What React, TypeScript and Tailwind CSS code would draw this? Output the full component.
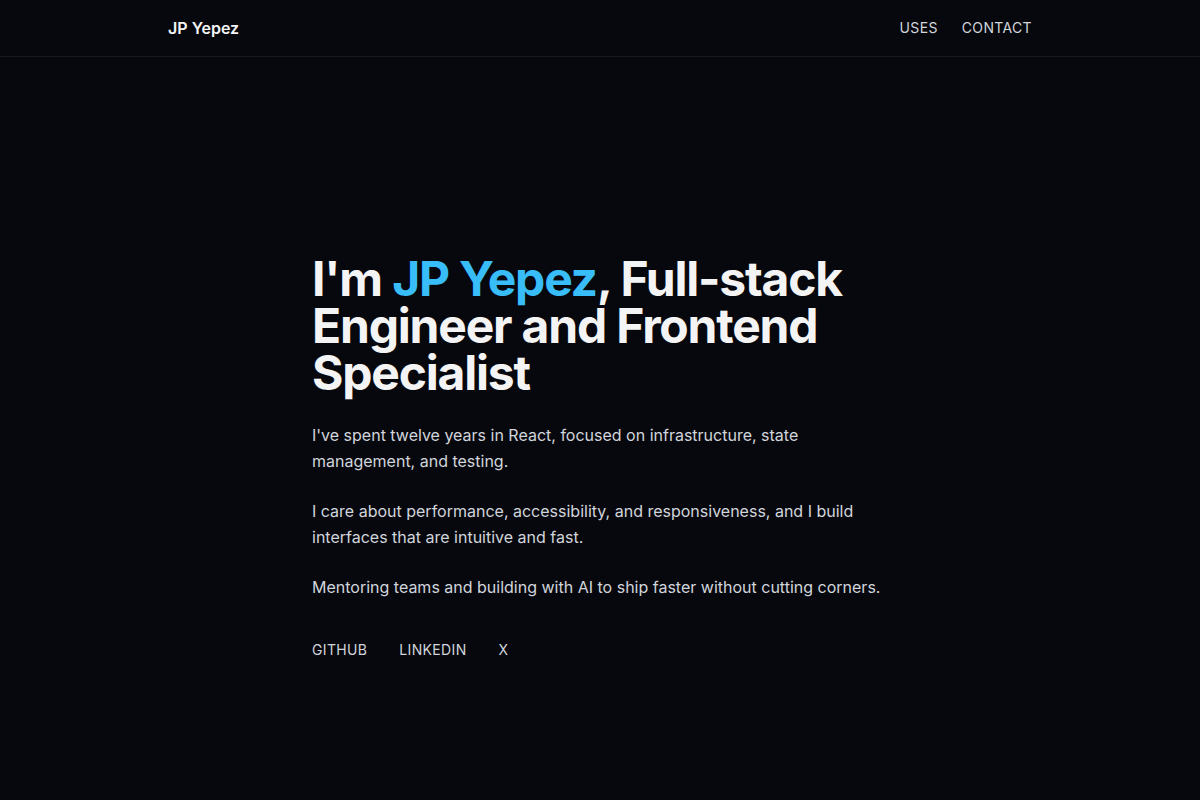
export default function App() {
  return (
    <div
      className="min-h-screen bg-[#07080d] text-gray-100"
      style={{ fontFamily: "Inter, 'Noto Sans', sans-serif" }}
    >
      <header className="border-b border-[#17181f]">
        <div className="mx-auto flex h-14 max-w-4xl items-center justify-between px-4">
          <a className="text-base font-semibold text-gray-100">JP Yepez</a>
          <nav className="flex gap-6 text-sm tracking-wide text-gray-300">
            <a>USES</a>
            <a>CONTACT</a>
          </nav>
        </div>
      </header>

      <main className="mx-auto max-w-xl pt-[198px]">
        <h1 className="text-5xl font-bold leading-[47px] tracking-tight text-[#f4f4f5]">
          I'm <span className="text-[#38bdf8]">JP Yepez</span>, Full-stack Engineer and Frontend
          Specialist
        </h1>
        <div className="mt-[26px] space-y-6 text-base leading-relaxed text-gray-300">
          <p>
            I've spent twelve years in React, focused on infrastructure, state management, and
            testing.
          </p>
          <p>
            I care about performance, accessibility, and responsiveness, and I build interfaces
            that are intuitive and fast.
          </p>
          <p>Mentoring teams and building with AI to ship faster without cutting corners.</p>
        </div>
        <div className="mt-10 flex gap-8 text-sm tracking-wide text-gray-300">
          <a>GITHUB</a>
          <a>LINKEDIN</a>
          <a>X</a>
        </div>
      </main>
    </div>
  );
}
